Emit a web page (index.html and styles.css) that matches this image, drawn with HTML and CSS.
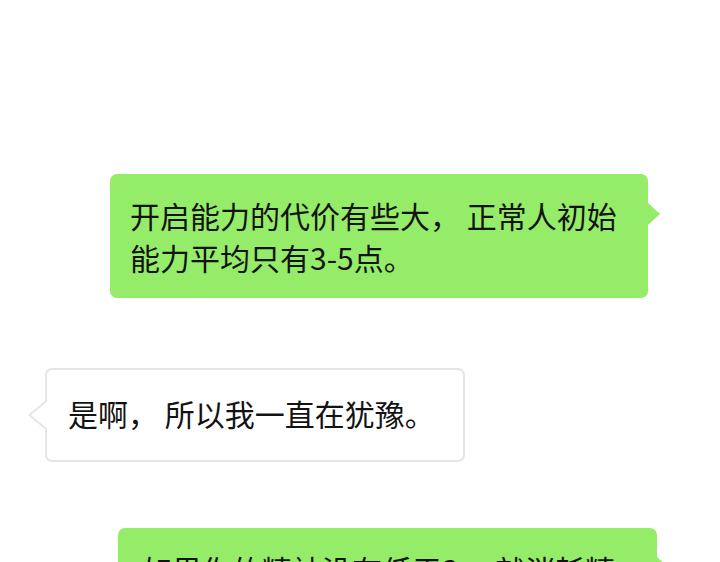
FILE: index.html
```html
<!DOCTYPE html>
<html lang="zh-CN">
<head>
<meta charset="utf-8">
<title>聊天</title>
<link rel="stylesheet" href="styles.css">
</head>
<body>
<main class="chat">
  <div class="msg msg-self msg-first">
    <p class="bubble bubble-green bubble-a">开启能力的代价有些大， 正常人初始能力平均只有3-5点。</p>
  </div>
  <div class="msg msg-other">
    <p class="bubble bubble-white bubble-b">是啊， 所以我一直在犹豫。</p>
  </div>
  <div class="msg msg-self msg-third">
    <p class="bubble bubble-green bubble-c">如果你的精神没有低于3， 就消耗精神来开启。</p>
  </div>
</main>
</body>
</html>
```

FILE: styles.css
```css
html, body {
  margin: 0;
  padding: 0;
  background: #ffffff;
}

body {
  width: 720px;
  height: 562px;
  overflow: hidden;
  font-family: "Noto Sans CJK SC", "Noto Sans", sans-serif;
  color: #131313;
}

.chat {
  display: flex;
  flex-direction: column;
  padding-top: 174px;
}

.msg {
  display: flex;
}

.msg-first {
  padding-left: 110px;
}

.msg-other {
  padding-left: 45px;
  margin-top: 70px;
}

.msg-third {
  padding-left: 118px;
  margin-top: 66px;
}

.bubble {
  position: relative;
  margin: 0;
  font-size: 30px;
  line-height: 42px;
  border-radius: 7px;
  box-sizing: border-box;
}

.bubble-green {
  background: #95ec69;
}

/* tail pointing right */
.bubble-green::after {
  content: "";
  position: absolute;
  right: -12px;
  top: 29px;
  width: 0;
  height: 0;
  border-left: 12px solid #95ec69;
  border-top: 11px solid transparent;
  border-bottom: 11px solid transparent;
}

.bubble-a {
  width: 538px;
  padding: 20px 20px 20px 20px;
}

.bubble-c {
  width: 539px;
  padding: 20px 20px 20px 24px;
}

.bubble-white {
  background: #ffffff;
  border: 2px solid #e5e5e5;
}

/* tail pointing left, outlined */
.bubble-white::before,
.bubble-white::after {
  content: "";
  position: absolute;
  width: 0;
  height: 0;
  border-top: 15px solid transparent;
  border-bottom: 15px solid transparent;
}

.bubble-white::before {
  left: -19px;
  top: 30px;
  border-right: 18px solid #e5e5e5;
}

.bubble-white::after {
  left: -16px;
  top: 30px;
  border-right: 18px solid #ffffff;
}

.bubble-b {
  width: 420px;
  padding: 22px 20px 26px 21px;
}
```
